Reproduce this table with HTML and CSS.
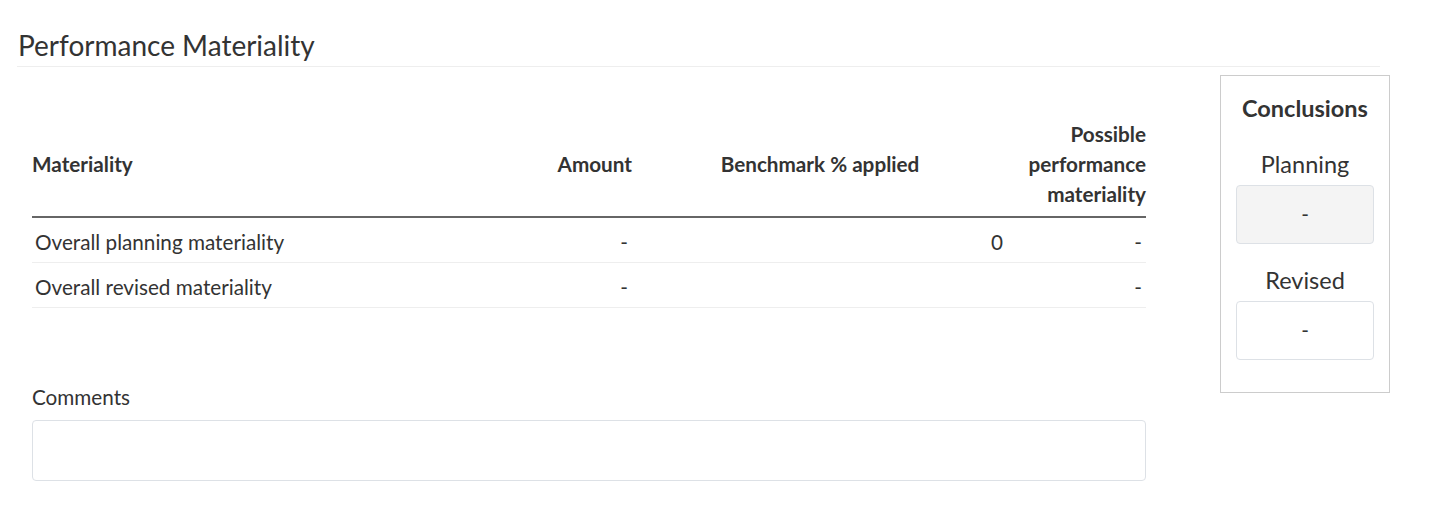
FILE: index.html
```html
<!DOCTYPE html>
<html lang="en">
<head>
   <meta charset="UTF-8">
   <meta name="viewport" content="width=device-width, initial-scale=1.0">
   <title>Performance Materiality</title>
   <link rel="stylesheet" href="styles.css">
</head>
<body>
   <div class="section">
       <h2 class="section-title">Performance Materiality</h2>

       <div class="section-body">
           <div class="main-col">
               <table class="materiality-table">
                   <colgroup>
                       <col class="col-name">
                       <col class="col-amount">
                       <col class="col-bench">
                       <col class="col-perf">
                   </colgroup>
                   <thead>
                       <tr>
                           <th class="left">Materiality</th>
                           <th class="right">Amount</th>
                           <th class="center">Benchmark % applied</th>
                           <th class="right last">Possible<br>performance<br>materiality</th>
                       </tr>
                   </thead>
                   <tbody>
                       <tr>
                           <td>Overall planning materiality</td>
                           <td class="right">-</td>
                           <td class="right bench"><span>0</span></td>
                           <td class="right last">-</td>
                       </tr>
                       <tr>
                           <td>Overall revised materiality</td>
                           <td class="right">-</td>
                           <td class="right bench"></td>
                           <td class="right last">-</td>
                       </tr>
                   </tbody>
               </table>

               <div class="comments">
                   <label for="comments">Comments</label>
                   <textarea id="comments"></textarea>
               </div>
           </div>

           <div class="conclusions">
               <h4>Conclusions</h4>
               <div class="conclusion-label first">Planning</div>
               <div class="conclusion-value grey">-</div>
               <div class="conclusion-label">Revised</div>
               <div class="conclusion-value">-</div>
           </div>
       </div>
   </div>
</body>
</html>
```

FILE: styles.css
```css
body {
    margin: 0;
    font-family: Lato, "Open Sans", sans-serif;
    color: #333;
    background: #fff;
}

.section {
    width: 1363px;
    padding-left: 17px;
}

.section-title {
    margin: 29px 0 0 0;
    padding: 0 0 3px 1px;
    font-size: 28px;
    font-weight: normal;
    line-height: 1.2;
    border-bottom: 1px solid #eee;
}

.section-body {
    display: flex;
    align-items: flex-start;
    margin-top: 8px;
}

.main-col {
    width: 1114px;
    flex-shrink: 0;
    margin-left: 15px;
    padding-top: 35px;
}

/* table */
.materiality-table {
    width: 100%;
    border-collapse: collapse;
    table-layout: fixed;
    font-size: 20.7px;
}

.col-name { width: 408px; }
.col-amount { width: 200px; }
.col-bench { width: 360px; }
.col-perf { width: 146px; }

.materiality-table th {
    font-weight: bold;
    line-height: 30px;
    padding: 9px 8px 7px;
    vertical-align: middle;
    border-bottom: 2px solid #666;
}

.materiality-table td {
    line-height: 28px;
    padding: 10px 12px 6px 3px;
    border-bottom: 1px solid #eee;
}

.materiality-table th.left { text-align: left; padding-left: 0; }
.materiality-table .right { text-align: right; }
.materiality-table .center { text-align: center; }
.materiality-table th.last { padding-right: 0; padding-left: 0; }
.materiality-table td.last { padding-right: 4px; }
.materiality-table td.bench { padding-right: 0; }
.materiality-table td.bench span { margin-right: -3px; }

/* comments */
.comments {
    margin-top: 75px;
}

.comments label {
    display: block;
    font-size: 20.7px;
    line-height: 28px;
    margin-bottom: 9px;
}

.comments textarea {
    display: block;
    box-sizing: border-box;
    width: 100%;
    height: 61px;
    border: 1px solid #dde1e6;
    border-radius: 4px;
    resize: none;
    font-family: inherit;
}

/* conclusions box */
.conclusions {
    width: 170px;
    flex-shrink: 0;
    box-sizing: border-box;
    margin-left: 74px;
    padding: 19px 15px 32px 15px;
    border: 1px solid #ccc;
    text-align: center;
}

.conclusions h4 {
    margin: 0;
    font-size: 23.5px;
    line-height: 26px;
    font-weight: bold;
}

.conclusion-label {
    font-size: 23.5px;
    line-height: 28px;
    margin: 22px 0 7px;
}

.conclusion-label.first {
    margin-top: 29px;
}

.conclusion-value {
    height: 59px;
    box-sizing: border-box;
    line-height: 57px;
    border: 1px solid #dde1e6;
    border-radius: 4px;
    font-size: 20.7px;
}

.conclusion-value.grey {
    background: #f4f4f4;
}
```
